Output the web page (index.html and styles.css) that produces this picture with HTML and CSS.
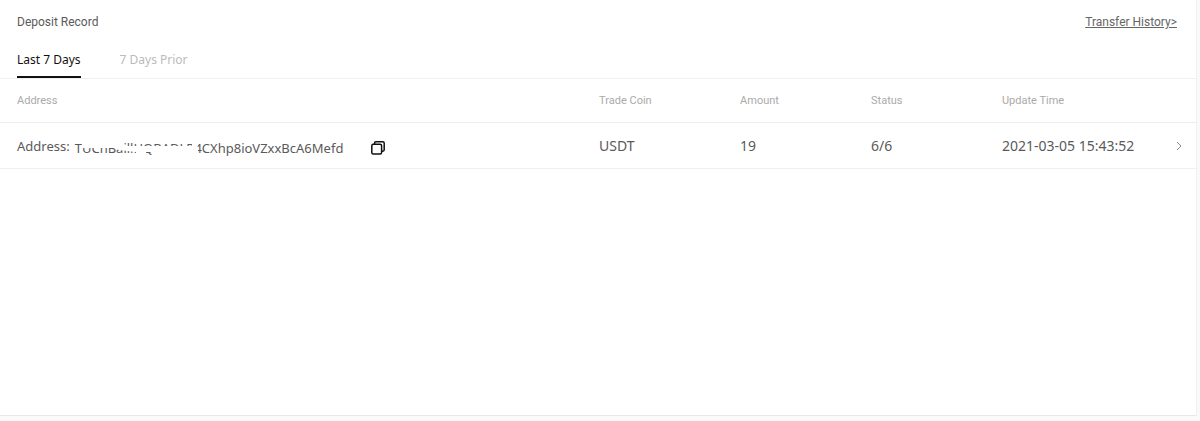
FILE: index.html
```html
<!DOCTYPE html>
<html lang="en">
<head>
    <meta charset="UTF-8">
    <meta name="viewport" content="width=device-width, initial-scale=1.0">
    <title>Deposit Record</title>
    <link rel="stylesheet" href="styles.css">
</head>
<body>
    <main class="record-panel">
        <header class="panel-header">
            <h1>Deposit Record</h1>
            <a href="#" class="history-link">Transfer History&gt;</a>
        </header>

        <nav class="tabs">
            <button type="button" class="tab active">Last 7 Days</button>
            <button type="button" class="tab">7 Days Prior</button>
        </nav>

        <table class="record-table">
            <colgroup>
                <col class="col-address">
                <col class="col-coin">
                <col class="col-amount">
                <col class="col-status">
                <col class="col-time">
            </colgroup>
            <thead>
                <tr>
                    <th scope="col">Address</th>
                    <th scope="col">Trade Coin</th>
                    <th scope="col">Amount</th>
                    <th scope="col">Status</th>
                    <th scope="col">Update Time</th>
                </tr>
            </thead>
            <tbody>
                <tr>
                    <td>
                        <div class="address">
                            <span>Address:</span>
                            <span class="address-value">TUCnBaillHQBADLR4CXhp8ioVZxxBcA6Mefd
                                <svg class="mask" width="124" height="20" viewBox="0 0 124 20" aria-hidden="true">
                                    <path d="M7 0H47V9H60L117 9V0H121V8L123 10V16H120V18H79V15H71V18H61V15L44 13L40 11H7Z" fill="#fff"/>
                                </svg>
                            </span>
                            <button type="button" class="copy-btn" aria-label="Copy address">
                                <svg width="16" height="16" viewBox="0 0 16 16" fill="none" stroke="#111" stroke-width="1.5">
                                    <path d="M4.5 4V3.2Q4.5 1.8 5.9 1.8H12.8Q14.2 1.8 14.2 3.2V9.8Q14.2 11.2 12.8 11.2H12"/>
                                    <rect x="1.8" y="4.2" width="9.8" height="9.8" rx="1.5"/>
                                </svg>
                            </button>
                        </div>
                    </td>
                    <td>USDT</td>
                    <td>19</td>
                    <td>6/6</td>
                    <td>
                        <div class="time">
                            <span>2021-03-05 15:43:52</span>
                            <button type="button" class="more-btn" aria-label="Show details">
                                <svg width="6" height="10" viewBox="0 0 6 10" fill="none" stroke="#888">
                                    <path d="M1 1L5 5L1 9"/>
                                </svg>
                            </button>
                        </div>
                    </td>
                </tr>
            </tbody>
        </table>
    </main>
</body>
</html>
```
FILE: styles.css
```css
* {
    margin: 0;
    padding: 0;
    box-sizing: border-box;
}

body {
    min-height: 100vh;
    display: flex;
    padding: 0 3px 5px 0;
    background: #fafafa;
    color: #5a5a5a;
    font-family: "Noto Sans", sans-serif;
    font-size: 14px;
}

button {
    background: none;
    border: none;
    font: inherit;
    cursor: pointer;
}

svg {
    display: block;
}

.record-panel {
    flex: 1;
    background: #fff;
    border-right: 1px solid #f0f0f0;
    border-bottom: 1px solid #e8e8e8;
}

.panel-header {
    display: flex;
    justify-content: space-between;
    align-items: center;
    height: 44px;
    padding: 0 19px 0 17px;
    font-family: Roboto, sans-serif;
    font-size: 12px;
}

.panel-header h1 {
    font-size: 12px;
    font-weight: 400;
}

.history-link {
    color: #666;
}

.tabs {
    display: flex;
    gap: 39px;
    height: 35px;
    padding-left: 17px;
    border-bottom: 1px solid #f0f0f0;
}

.tab {
    height: 34px;
    padding-bottom: 2px;
    border-bottom: 2px solid transparent;
    color: #bbb;
    font-size: 12px;
}

.tab.active {
    color: #111;
    border-bottom-color: #111;
}

.record-table {
    width: 100%;
    table-layout: fixed;
    border-collapse: separate;
    border-spacing: 0;
}

.col-address {
    width: 48.67%;
}

.col-coin {
    width: 11.79%;
}

.col-amount,
.col-status {
    width: 10.95%;
}

.record-table th {
    height: 44px;
    padding-left: 17px;
    border-bottom: 1px solid #ebebf0;
    color: #aaa;
    font-family: Roboto, sans-serif;
    font-size: 11px;
    font-weight: 400;
    text-align: left;
}

.record-table td {
    height: 46px;
    padding-left: 17px;
    border-bottom: 1px solid #f0f0f0;
}

.address {
    display: flex;
    align-items: center;
    gap: 5px;
    font-size: 13px;
}

.address-value {
    position: relative;
    padding-top: 4px;
}

/* hides part of the wallet address */
.mask {
    position: absolute;
    top: 2px;
    left: 0;
}

.copy-btn {
    margin-left: 22px;
    padding-top: 4px;
}

.time {
    display: flex;
    justify-content: space-between;
    align-items: center;
    padding-right: 14px;
}
```
